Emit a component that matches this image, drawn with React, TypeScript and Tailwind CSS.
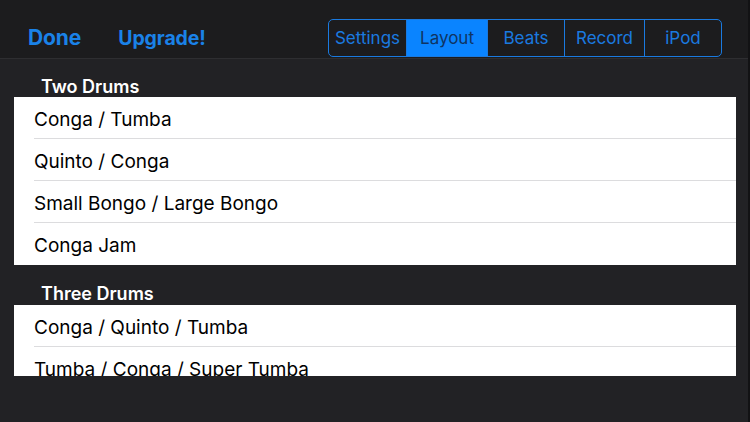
import React from 'react';

const tabs = ['Settings', 'Layout', 'Beats', 'Record', 'iPod'];
const tabWidths = ['w-[77px]', 'w-[81px]', 'w-[77px]', 'w-[80px]', 'w-[77px]'];

const Row: React.FC<{ label: string; last?: boolean }> = ({ label, last }) => (
  <div className="pl-5 bg-white">
    <div className={`h-[42px] flex items-center pt-[5px] text-[19px] text-black ${last ? '' : 'border-b border-[#dcdcde]'}`}>
      {label}
    </div>
  </div>
);

const App: React.FC = () => {
  return (
    <div
      className="w-[750px] h-[422px] bg-[#222225] flex flex-col overflow-hidden border-r-2 border-[#121214]"
      style={{ fontFamily: 'Inter, "Liberation Sans", sans-serif' }}
    >
      {/* Top bar */}
      <div className="h-[59px] shrink-0 bg-[#1c1c1e] border-b border-[#2e2e31] flex items-center pt-[17px] pl-7 pr-[26px]">
        <button className="text-[#1a82e8] text-[21px] leading-[24px] font-bold tracking-[-0.1px]">Done</button>
        <button className="ml-[37px] text-[#1a82e8] text-[19.5px] leading-[24px] font-bold tracking-[-0.1px] pt-[1px]">Upgrade!</button>
        <div className="ml-auto flex h-[38px] border border-[#1a7ae0] rounded-[5px] overflow-hidden">
          {tabs.map((t, i) => (
            <div
              key={t}
              className={`${tabWidths[i]} flex items-center justify-center pt-[2px] text-[17px] ${
                i > 0 ? 'border-l border-[#1a7ae0]' : ''
              } ${t === 'Layout' ? 'bg-[#0a84ff] text-[#0f3463]' : 'text-[#1a7ae0]'}`}
            >
              {t}
            </div>
          ))}
        </div>
      </div>

      {/* Content */}
      <div className="flex-1 pl-[14px] pr-3">
        <div className="h-[38px] flex items-end pl-[27px] text-white text-[18px] font-semibold leading-[20px]">Two Drums</div>
        <div>
          <Row label="Conga / Tumba" />
          <Row label="Quinto / Conga" />
          <Row label="Small Bongo / Large Bongo" />
          <Row label="Conga Jam" last />
        </div>
        <div className="h-[40px] flex items-end pl-[27px] pb-[1px] text-white text-[18px] font-semibold leading-[20px]">Three Drums</div>
        <div className="h-[71px] overflow-hidden">
          <Row label="Conga / Quinto / Tumba" />
          <Row label="Tumba / Conga / Super Tumba" />
        </div>
      </div>
    </div>
  );
};

export default App;
